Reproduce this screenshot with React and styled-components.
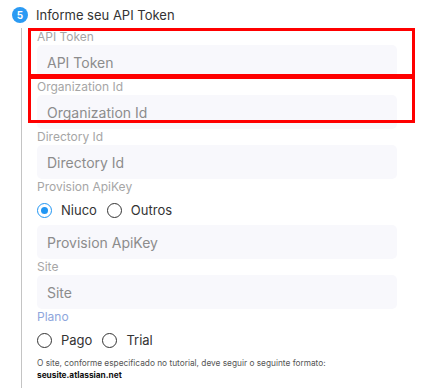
import React from 'react';
import styled, { createGlobalStyle } from 'styled-components';

const GlobalStyle = createGlobalStyle`
  body {
    margin: 0;
    background: #fff;
    font-family: Inter, "Noto Sans", sans-serif;
  }
`;

const Step = styled.section`
  width: 426px;
  height: 388px;
  overflow: hidden;
  padding: 7px 0 0 12px;
  box-sizing: border-box;
`;

const StepHeader = styled.div`
  display: flex;
  align-items: center;
  gap: 8px;
  height: 16px;
`;

const Badge = styled.span`
  display: flex;
  flex-shrink: 0;
  align-items: center;
  justify-content: center;
  width: 16px;
  height: 16px;
  border-radius: 50%;
  background: #2b9af3;
  color: #fff;
  font-size: 10px;
  font-weight: 700;
`;

const StepTitle = styled.span`
  font-size: 13px;
  color: #333;
`;

const StepBody = styled.div`
  margin: 5px 0 0 9px;
  padding: 1px 0 0 15px;
  border-left: 1px solid #c4c4c4;
  width: 360px;
  height: 400px;
`;

const Field = styled.div`
  position: relative;
  display: flex;
  flex-direction: column;

  ${(p) =>
    p.$highlight &&
    `
    &::after {
      content: '';
      position: absolute;
      top: ${p.$top}px;
      left: -9px;
      right: -18px;
      height: ${p.$height}px;
      border: 3px solid #ff0000;
      box-sizing: border-box;
      pointer-events: none;
    }
  `}
`;

const Label = styled.label`
  font-size: 12px;
  line-height: 16px;
  color: ${(p) => (p.$accent ? '#8ea6dc' : '#a6a6a6')};
`;

const Input = styled.input`
  height: 34px;
  width: 100%;
  box-sizing: border-box;
  border: none;
  border-radius: 5px;
  background: #f8f8fc;
  padding: 0 10px;
  font-family: inherit;
  font-size: 14px;
  color: #333;
  outline: none;

  &::placeholder {
    color: #8c8c8c;
  }
`;

const RadioRow = styled.div`
  display: flex;
  align-items: center;
  height: ${(p) => p.$height || 30}px;
  gap: 10px;
`;

const RadioOption = styled.label`
  display: flex;
  align-items: center;
  gap: 9px;
  font-size: 13px;
  color: #333;
`;

const RadioDot = styled.span`
  width: 15px;
  height: 15px;
  box-sizing: border-box;
  border-radius: 50%;
  border: 1.5px solid ${(p) => (p.$checked ? '#2196f3' : '#333')};
  display: flex;
  align-items: center;
  justify-content: center;

  &::after {
    content: '';
    width: 7px;
    height: 7px;
    border-radius: 50%;
    background: ${(p) => (p.$checked ? '#2196f3' : 'transparent')};
  }
`;

const Help = styled.p`
  margin: 2px 0 0;
  font-size: 8.3px;
  line-height: 12px;
  color: #555;
`;

const HelpStrong = styled.strong`
  display: block;
  color: #111;
  font-weight: 700;
`;

const Radio = ({ label, checked }) => (
  <RadioOption>
    <RadioDot $checked={checked} />
    {label}
  </RadioOption>
);

const TextField = ({ label, highlight, top, height }) => (
  <Field $highlight={highlight} $top={top} $height={height}>
    <Label>{label}</Label>
    <Input placeholder={label} />
  </Field>
);

export default function App() {
  return (
    <>
      <GlobalStyle />
      <Step>
        <StepHeader>
          <Badge>5</Badge>
          <StepTitle>Informe seu API Token</StepTitle>
        </StepHeader>
        <StepBody>
          <TextField label='API Token' highlight top={-1} height={49} />
          <TextField label='Organization Id' highlight top={-3} height={47} />
          <TextField label='Directory Id' />
          <Field>
            <Label>Provision ApiKey</Label>
            <RadioRow $height={30}>
              <Radio label='Niuco' checked />
              <Radio label='Outros' />
            </RadioRow>
            <Input placeholder='Provision ApiKey' />
          </Field>
          <TextField label='Site' />
          <Field>
            <Label $accent>Plano</Label>
            <RadioRow $height={30}>
              <Radio label='Pago' />
              <Radio label='Trial' />
            </RadioRow>
          </Field>
          <Help>
            O site, conforme especificado no tutorial, deve seguir o seguinte formato:
            <HelpStrong>seusite.atlassian.net</HelpStrong>
          </Help>
        </StepBody>
      </Step>
    </>
  );
}
